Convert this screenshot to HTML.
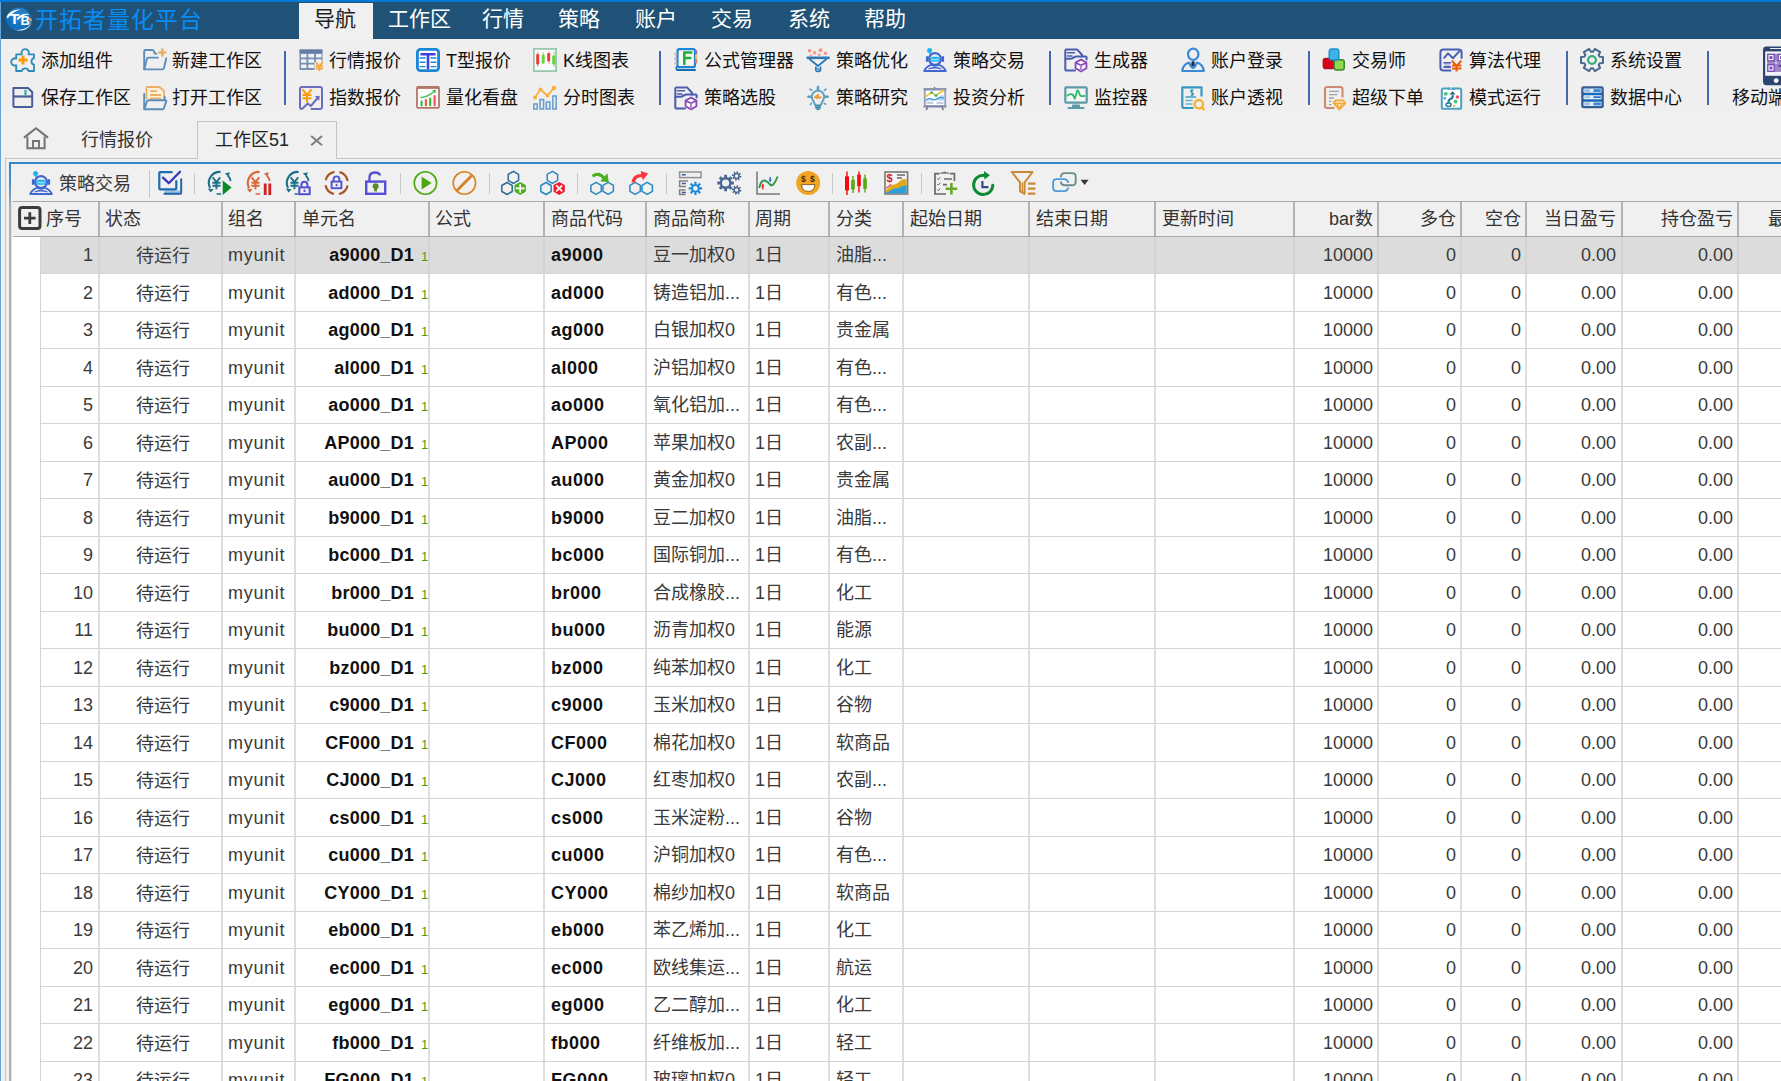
<!DOCTYPE html>
<html lang="zh-CN"><head><meta charset="utf-8"><title>开拓者量化平台</title>
<style>
*{box-sizing:border-box;margin:0;padding:0}
html,body{width:1781px;height:1081px;overflow:hidden}
body{position:relative;background:#f0f0f0;font-family:"Liberation Sans","Noto Sans CJK SC",sans-serif;font-size:18px;color:#1a1a1a;line-height:1}
.a{position:absolute;white-space:nowrap}
#title{left:0;top:0;width:1781px;height:39px;background:#1f5276;border-top:2px solid #0078d4}
#lb{left:0;top:2px;width:1px;height:1081px;background:#62a4d8}
#tt{left:35px;top:6px;font-size:23px;letter-spacing:1px;color:#0a8cf5;line-height:28px}
.mn{top:4px;height:34px;line-height:29px;font-size:21px;color:#fff;text-align:center}
#mact{left:299px;top:3px;width:74px;height:36px;background:#f0f0f0}
#ribbon{left:1px;top:39px;width:1780px;height:75px;background:#efefef}
.rt{font-size:18px;line-height:24px;color:#111;height:24px}
.rs{width:2px;background:#4466ac;top:51px;height:54px}
.ic{position:absolute;overflow:visible}
#tabline{left:5px;top:158px;width:1776px;height:1px;background:#c4c4c4}
#tabl{left:5px;top:158px;width:1px;height:923px;background:#c4c4c4}
#tabl2{left:6px;top:159px;width:1px;height:923px;background:#dcdcdc}
#acttab{left:197px;top:121px;width:140px;height:38px;background:#f0f0f0;border:1px solid #c4c4c4;border-bottom:none}
.dt{font-size:18px;line-height:24px;top:128px;color:#333}
#panel{left:10px;top:162px;width:1780px;height:930px;border-top:2px solid #3288ca;background:#f0f0f0}
#panl{left:9px;top:162px;width:2px;height:930px;background:linear-gradient(to bottom,#3288ca 0px,#4a8ec6 22px,#8aa2b8 36px,#b0b0b0 46px,#b2b2b2 100%)}
#panl2{left:11px;top:200px;width:1px;height:900px;background:#e0e0e0}
#tbline{display:none}
#hdr{left:13px;top:201px;width:1768px;height:36px;background:#f0f0f0;border-bottom:1px solid #a8a8a8;border-top:1px solid #a8a8a8}
.hd{top:203px;height:32px;line-height:33px;font-size:18px;color:#333}
.hv{top:202px;width:2px;height:34px;background:#b2b2b2}
#grid{left:12px;top:237px;width:1769px;height:844px;background:#fff}
.row{left:40px;width:1741px;height:1px;background:#d4d4d4}
.cv{top:237px;width:2px;height:844px;background:#dedede}
#sel{left:40px;top:237px;width:1741px;height:37px;background:#dcdcdc}
.c{height:37px;line-height:36px;font-size:18px;color:#3a3a3a}
.b{font-weight:bold;color:#111}
.g{color:#4aa010;font-size:13px;padding-top:2px}
.m{letter-spacing:0.7px}
.b1{letter-spacing:0.5px}
.b2{letter-spacing:0.2px}
  .tsep{top:173px;width:1px;height:21px;background:#c8c8c8}
</style></head>
<body>
<div class="a" id="title"></div>
<div class="a" id="mact"></div>
<svg class="ic" style="left:6px;top:7px" width="26" height="25" viewBox="0 0 26 25" fill="none"><defs><radialGradient id="lg" cx="0.55" cy="0.35" r="0.75"><stop offset="0" stop-color="#2a86d0"/><stop offset="1" stop-color="#0664b4"/></radialGradient></defs>
<ellipse cx="12.7" cy="12.3" rx="12.6" ry="11.7" fill="url(#lg)"/>
<path d="M0.5 10 C2.6 5 8 2.2 15 2.2 C9.4 4 4.6 7 1.6 11.6 Z" fill="#fff"/>
<path d="M10.8 11.6 C13.6 7.6 18.6 6 23.6 7.2 C18.6 7.8 14.6 9.8 11.8 13.2Z" fill="#fff"/>
<path d="M25.2 13.4 C25 20 17.4 23.6 8 22.8 C16.4 25.4 25.2 21.6 25.4 14Z" fill="#fff" opacity="0.92"/>
<text x="8.4" y="17" text-anchor="middle" font-family="'Liberation Sans',sans-serif" font-weight="bold" font-size="15.5" fill="#fff">T</text>
<text x="14.6" y="18.4" font-family="'Liberation Sans',sans-serif" font-weight="bold" font-size="13" fill="#fff">B</text>
<circle cx="24.3" cy="12.6" r="1.6" fill="#eea040"/></svg>
<div class="a" id="tt">开拓者量化平台</div>
<div class="a mn" style="left:314px;color:#222">导航</div>
<div class="a mn" style="left:388px;color:#fff">工作区</div>
<div class="a mn" style="left:482px;color:#fff">行情</div>
<div class="a mn" style="left:558px;color:#fff">策略</div>
<div class="a mn" style="left:635px;color:#fff">账户</div>
<div class="a mn" style="left:711px;color:#fff">交易</div>
<div class="a mn" style="left:788px;color:#fff">系统</div>
<div class="a mn" style="left:864px;color:#fff">帮助</div>
<div class="a" id="ribbon"></div>
<svg class="ic" style="left:11px;top:48px" width="24" height="24" viewBox="0 0 24 24" fill="none"><path d="M5.2 6.3 H10.8 A3.7 3.7 0 1 1 17.6 6.3 H23 V10.2 A3.3 3.3 0 0 0 23 16.6 V23 H17.6 A3.5 3.5 0 0 0 10.8 23 H5.2 V17.2 A3.6 3.6 0 1 1 5.2 10.6 Z" stroke="#2a8ab8" stroke-width="1.8" stroke-linejoin="round"/>
<path d="M12 7.5v9M7.5 12h9" stroke="#fa9a0c" stroke-width="3"/></svg>
<div class="a rt" style="left:41px;top:49px">添加组件</div>
<svg class="ic" style="left:143px;top:48px" width="24" height="24" viewBox="0 0 24 24" fill="none"><path d="M1.2 20.5 V3.2 Q1.2 2 2.4 2 H9.5 Q10.6 2 10.9 3 L11.8 5.6 H13.5" stroke="#5b8db8" stroke-width="1.9" stroke-linecap="round" stroke-linejoin="round"/>
<path d="M1.3 21.3 L4 10.6 Q4.3 9.6 5.4 9.6 H15" stroke="#5b8db8" stroke-width="1.9" stroke-linecap="round" stroke-linejoin="round"/>
<path d="M1.3 21.4 H19.5 Q20.6 21.4 20.9 20.3 L23.3 10.3" stroke="#5b8db8" stroke-width="1.9" stroke-linecap="round" stroke-linejoin="round"/>
<path d="M19.3 0.5v8M15.3 4.5h8" stroke="#eab068" stroke-width="2.6"/></svg>
<div class="a rt" style="left:172px;top:49px">新建工作区</div>
<svg class="ic" style="left:11px;top:84.7px" width="24" height="24" viewBox="0 0 24 24" fill="none"><path d="M2.4 3 H17 L21.2 7 V21 Q21.2 22 20.2 22 H3.4 Q2.4 22 2.4 21 Z" stroke="#4a5c9a" stroke-width="2" stroke-linejoin="round"/>
<path d="M2.4 11.5H21.2" stroke="#4a5c9a" stroke-width="2.2"/>
<path d="M14.5 5.6v4" stroke="#3cb8a8" stroke-width="2.4" stroke-linecap="round"/></svg>
<div class="a rt" style="left:41px;top:86px">保存工作区</div>
<svg class="ic" style="left:143px;top:85.5px" width="24" height="24" viewBox="0 0 24 24" fill="none"><path d="M3.5 13 V2 Q3.5 1 4.5 1 H16.5 L21 5 V13" fill="#fdf1de" stroke="#eab068" stroke-width="1.8" stroke-linejoin="round"/>
<path d="M7 5.2h7M7 9h11M7 12.3h11" stroke="#eab068" stroke-width="1.8"/>
<path d="M1.2 8 V22.6" stroke="#5b8db8" stroke-width="1.9" stroke-linecap="round"/>
<path d="M21.6 11v3" stroke="#5b8db8" stroke-width="1.9" stroke-linecap="round"/>
<path d="M1.3 23.3 L4 15.2 Q4.3 14.2 5.4 14.2 H22.3 Q23.6 14.2 23.2 15.4 L20.9 22.3 Q20.6 23.3 19.5 23.3 Z" fill="#efefef" stroke="#5b8db8" stroke-width="1.9" stroke-linejoin="round"/></svg>
<div class="a rt" style="left:172px;top:86px">打开工作区</div>
<svg class="ic" style="left:299px;top:48px" width="24" height="24" viewBox="0 0 24 24" fill="none"><rect x="0.5" y="1.5" width="23" height="20.5" rx="1" fill="#7a90b0"/>
<rect x="0.5" y="1.5" width="23" height="3.5" fill="#647ea6"/>
<g fill="#f0f2f6"><rect x="2" y="6" width="5.5" height="3.4" rx="0.6"/><rect x="9.3" y="6" width="5.8" height="3.4" rx="0.6"/><rect x="17" y="6" width="5.5" height="3.4" rx="0.6"/>
<rect x="2" y="11.3" width="5.5" height="3.4" rx="0.6"/><rect x="9.3" y="11.3" width="5.8" height="3.4" rx="0.6"/><rect x="17" y="11.3" width="5.5" height="3" rx="0.6"/>
<rect x="2" y="16.6" width="5.5" height="3.4" rx="0.6"/><rect x="9.3" y="16.6" width="5.8" height="3.4" rx="0.6"/></g>
<rect x="15.5" y="13.5" width="9" height="9.5" fill="#efefef"/>
<path d="M16.8 14 L20.3 18.5 L23.8 14 M20.3 18.5 V23 M16.8 18.3h7 M16.8 20.6h7" stroke="#f8a838" stroke-width="1.9"/></svg>
<div class="a rt" style="left:329px;top:49px">行情报价</div>
<svg class="ic" style="left:416px;top:48px" width="24" height="24" viewBox="0 0 24 24" fill="none"><rect x="1.4" y="1.4" width="21.2" height="21.2" rx="3" stroke="#1a86d8" stroke-width="2.8" fill="#fff"/>
<path d="M3.5 10h6M3.5 14.3h6M3.5 18.6h6M14.5 10h6M14.5 14.3h6M14.5 18.6h6" stroke="#1a86d8" stroke-width="1.4"/>
<path d="M5.5 6.2h13M12 6.2v14" stroke="#3c40dc" stroke-width="2.6" stroke-linecap="round"/></svg>
<div class="a rt" style="left:446px;top:49px">T型报价</div>
<svg class="ic" style="left:533px;top:48px" width="24" height="24" viewBox="0 0 24 24" fill="none"><rect x="0.9" y="0.9" width="22.2" height="22.2" fill="#fbfbfb" stroke="#94c4ae" stroke-width="1.7"/>
<path d="M4.7 3.5v15.5M16 3.5v12.5" stroke="#f4a0a0" stroke-width="1.2"/>
<path d="M10.2 4v12M21 3.5v15.5" stroke="#a8e090" stroke-width="1.2"/>
<rect x="3.2" y="6" width="3" height="10.5" rx="0.8" fill="#ee3c3c"/>
<rect x="8.7" y="6.5" width="3" height="9" rx="1.2" fill="#66d440"/>
<rect x="14.2" y="5" width="3" height="8.5" rx="1.2" fill="#ee3c3c"/>
<rect x="19.2" y="7.5" width="3.2" height="9" rx="0.8" fill="#66d440"/></svg>
<div class="a rt" style="left:563px;top:49px">K线图表</div>
<svg class="ic" style="left:299px;top:85.5px" width="24" height="24" viewBox="0 0 24 24" fill="none"><path d="M12.5 23 H21 Q23 23 23 21 V3 Q23 1 21 1 H3 Q1 1 1 3 V21.5" stroke="#6a6eb8" stroke-width="2" stroke-linecap="round"/>
<path d="M1.5 22.5 Q2.5 23.5 3.8 22.3 L8.8 17.5 L11.8 20 L19.5 11" stroke="#6a6eb8" stroke-width="2" stroke-linecap="round" stroke-linejoin="round"/>
<path d="M15.8 10.2 L20.6 9.8 L20.2 14.8 Z" fill="#6a6eb8"/>
<path d="M3.5 3.5 L8 9 L12.5 3.5 M8 9 V16.5 M3.5 9h9 M3.5 12.3h9" stroke="#fa9a0c" stroke-width="2"/></svg>
<div class="a rt" style="left:329px;top:86px">指数报价</div>
<svg class="ic" style="left:416px;top:85.5px" width="24" height="23" viewBox="0 0 24 23" fill="none"><rect x="1" y="1" width="22" height="20.8" rx="1" fill="#fbfbfb" stroke="#b27868" stroke-width="1.8"/>
<path d="M1 1.8h22" stroke="#b27868" stroke-width="2.2"/>
<path d="M5.6 15.5v3.8M14.2 12.5v6.8" stroke="#3cb83c" stroke-width="2.2" stroke-linecap="round"/>
<path d="M9.9 14v5.3M18.6 10v9.3" stroke="#f05858" stroke-width="2.2" stroke-linecap="round"/>
<path d="M5 11.5 Q12 11 18 5.5" stroke="#58c068" stroke-width="1.6" stroke-linecap="round"/>
<path d="M16.2 4.2 L19.8 3.8 L19.4 7.6 Z" fill="#3cb83c"/></svg>
<div class="a rt" style="left:446px;top:86px">量化看盘</div>
<svg class="ic" style="left:533px;top:85.5px" width="24" height="24" viewBox="0 0 24 24" fill="none"><path d="M2 11.5 L7.5 3.5 L14.5 9.5 L21 1.8" stroke="#fab040" stroke-width="1.8" stroke-linejoin="round"/>
<circle cx="2" cy="11.5" r="2" fill="#fab040"/><circle cx="7.5" cy="3.6" r="2" fill="#fab040"/><circle cx="14.5" cy="9.4" r="2" fill="#fab040"/><circle cx="21" cy="2" r="2.3" fill="#fab040"/>
<g stroke="#6c9ccc" stroke-width="1.5" fill="#e4ebf3"><rect x="0.8" y="18" width="3.4" height="5"/><rect x="7" y="13.5" width="3.6" height="9.5"/><rect x="13.3" y="16" width="3.6" height="7"/><rect x="19.8" y="10" width="3.4" height="13"/></g></svg>
<div class="a rt" style="left:563px;top:86px">分时图表</div>
<svg class="ic" style="left:674px;top:48px" width="24" height="24" viewBox="0 0 24 24" fill="none"><path d="M3.5 22 H21" stroke="#1a6ea8" stroke-width="2" stroke-linecap="round"/>
<path d="M3.2 22 Q1.8 21 2.5 19" stroke="#1a6ea8" stroke-width="1.8" stroke-linecap="round"/>
<rect x="3.5" y="1.2" width="17.5" height="18" rx="2" fill="#fbf6f0" stroke="#1a86d8" stroke-width="2.2"/>
<rect x="21.2" y="2" width="2" height="4.6" fill="#a868c8"/><rect x="21.2" y="6.6" width="2" height="4.4" fill="#f8d048"/><rect x="21.2" y="11" width="2" height="4.4" fill="#f07868"/>
<circle cx="1.8" cy="6" r="1.5" fill="#b8b8b8"/><circle cx="1.8" cy="10.5" r="1.5" fill="#b8b8b8"/><circle cx="1.8" cy="15" r="1.5" fill="#b8b8b8"/>
<path d="M10.3 16V4.5h7M10.3 10h6" stroke="#1ab03c" stroke-width="2.5" stroke-linecap="round" stroke-linejoin="round"/></svg>
<div class="a rt" style="left:704px;top:49px">公式管理器</div>
<svg class="ic" style="left:806px;top:48px" width="24" height="24" viewBox="0 0 24 24" fill="none"><circle cx="3.5" cy="2.8" r="1.8" fill="#fa9080"/><circle cx="8.6" cy="4.8" r="1.7" fill="#fa9080"/><circle cx="14.5" cy="2.2" r="1.9" fill="#fa9080"/><circle cx="19.4" cy="5.2" r="1.7" fill="#fa9080"/><circle cx="13.2" cy="6.8" r="1.3" fill="#fa9080"/><circle cx="4.8" cy="7.4" r="1.1" fill="#fa9080"/>
<path d="M0.6 9.8H23.6" stroke="#2a7ab8" stroke-width="2.6"/>
<path d="M3.2 10.8 L12 18 L20.8 10.8" stroke="#2a7ab8" stroke-width="1.8" stroke-linejoin="round"/>
<path d="M9.8 18.5 V22 Q9.8 23.3 11.1 23.3 H13.2 Q14.5 23.3 14.5 22 V18.5" stroke="#2a7ab8" stroke-width="1.7"/>
<path d="M10.3 20 L13.8 22" stroke="#2a7ab8" stroke-width="1.2"/></svg>
<div class="a rt" style="left:836px;top:49px">策略优化</div>
<svg class="ic" style="left:923px;top:48px" width="24" height="24" viewBox="0 0 24 24" fill="none"><path d="M6.6 4.6 L8 7.4" stroke="#1ab4f0" stroke-width="1.6"/><circle cx="6.6" cy="2.6" r="2.5" fill="#1ab4f0"/>
<circle cx="12" cy="11" r="5.9" stroke="#4068d0" stroke-width="2.2"/>
<path d="M4.2 8.2v5.6M19.8 8.2v5.6" stroke="#4068d0" stroke-width="2.6"/>
<rect x="7.8" y="9.3" width="8.4" height="3.8" rx="1.9" fill="#8adcf8" stroke="#1ab4f0" stroke-width="1.2"/>
<path d="M9.5 10.2h5" stroke="#1ab4f0" stroke-width="1.2"/>
<path d="M1.2 23 Q3 18.5 8.6 16.6 Q12 19 15.4 16.6 Q21 18.5 22.8 23 Z" stroke="#4068d0" stroke-width="2" stroke-linejoin="round"/>
<path d="M5.5 21 Q12 18.5 18.5 21" stroke="#4068d0" stroke-width="1.3"/></svg>
<div class="a rt" style="left:953px;top:49px">策略交易</div>
<svg class="ic" style="left:674px;top:85.5px" width="24" height="24" viewBox="0 0 24 24" fill="none"><path d="M11 22.6 H2.5 Q1.3 22.6 1.3 21.4 V2.6 Q1.3 1.4 2.5 1.4 H13 L18 6.8 V8.5" stroke="#4a5cb0" stroke-width="2" stroke-linecap="round" stroke-linejoin="round"/>
<path d="M3.5 4.8h7M3.5 7.9h4.5" stroke="#4a5cb0" stroke-width="1.5" stroke-linecap="round"/>
<path d="M1.6 10.8 H6 Q8 10.8 9.5 9.6 Q11 8.5 13 8.5 H21.6 Q22.6 8.5 22.6 9.6 V11.5" stroke="#4a5cb0" stroke-width="2" stroke-linecap="round"/>
<path d="M17 11.6 L22.4 14.5 V20.3 L17 23.4 L11.6 20.3 V14.5 Z" fill="#fff" stroke="#8a48b8" stroke-width="1.9" stroke-linejoin="round"/>
<path d="M11.8 14.7 L17 17.3 L22.2 14.7" stroke="#8a48b8" stroke-width="1.7"/>
<path d="M17 17.3V23" stroke="#b088d0" stroke-width="2.2"/></svg>
<div class="a rt" style="left:704px;top:86px">策略选股</div>
<svg class="ic" style="left:806px;top:85.5px" width="24" height="24" viewBox="0 0 24 24" fill="none"><g stroke="#5c9ebc" stroke-linecap="round"><path d="M12 1v2.6" stroke-width="2.6"/><path d="M2.3 10.7h3M18.7 10.7h3" stroke-width="2.4"/><path d="M4 3.2l1.8 1M20 3.2l-1.6 1.2M4.4 18.6l1-1.4M19.8 18.2l-1.6-.8" stroke-width="1.6"/></g>
<path d="M9 19.2 Q8.6 16.8 7.2 14.8 Q5.8 13 5.8 10.8 A6.2 6.2 0 0 1 18.2 10.8 Q18.2 13 16.800000000000001 14.8 Q15.4 16.8 15 19.2" stroke="#5c9ebc" stroke-width="1.9"/>
<path d="M8.8 19.6h6.4M9.2 21.8h5.6" stroke="#3a8aaa" stroke-width="2"/>
<path d="M10.5 23.4h3" stroke="#3a8aaa" stroke-width="1.6"/>
<path d="M8 11.3 L12.6 8 L12.4 10.6 L16 11.4 L11.2 12.6 Z" fill="#eaa040" stroke="#eaa040" stroke-width="1"/></svg>
<div class="a rt" style="left:836px;top:86px">策略研究</div>
<svg class="ic" style="left:923px;top:85.5px" width="24" height="24" viewBox="0 0 24 24" fill="none"><path d="M11.5 0.5 L13 2.5 H10z" fill="#7078a0"/>
<path d="M4.5 21l-1 2.5M19 21l1 2.5" stroke="#6a7290" stroke-width="1.6" stroke-linecap="round"/>
<rect x="1.8" y="3.4" width="20.4" height="16.6" fill="#fff" stroke="#9ca2bc" stroke-width="1.9"/>
<path d="M0.6 3.2h22.8" stroke="#8a90b0" stroke-width="2.2"/>
<path d="M0.6 20.6h22.8" stroke="#8088a8" stroke-width="1.8"/>
<path d="M2.6 14 Q6 10.5 9 12.5 Q12 14.5 14 12 Q17 8.5 21.4 9.5 V14.5 H2.6Z" fill="#a8d4f0"/>
<path d="M2.6 14.5 Q6 11.5 8.5 13 Q11 14.5 13.5 13 Q17 11 21.4 12" stroke="#4a98d8" stroke-width="1.2"/>
<path d="M2.6 10.5 L8.5 6.5 L13 9.5 L20 4.5" stroke="#f4c838" stroke-width="2" stroke-linejoin="round"/>
<circle cx="8.6" cy="6.6" r="1.3" fill="#28b890"/><circle cx="13" cy="9.6" r="1.4" fill="#28b890"/><circle cx="19.6" cy="4.8" r="1.3" fill="#f4c838"/>
<path d="M3.5 16.8h7M13.5 16.8h7" stroke="#c8ccd8" stroke-width="2.2"/></svg>
<div class="a rt" style="left:953px;top:86px">投资分析</div>
<svg class="ic" style="left:1064px;top:48px" width="24" height="24" viewBox="0 0 24 24" fill="none"><path d="M11 22.6 H2.5 Q1.3 22.6 1.3 21.4 V2.6 Q1.3 1.4 2.5 1.4 H13 L18 6.8 V8.5" stroke="#4a5cb0" stroke-width="2" stroke-linecap="round" stroke-linejoin="round"/>
<path d="M3.5 4.8h7M3.5 7.9h4.5" stroke="#4a5cb0" stroke-width="1.5" stroke-linecap="round"/>
<path d="M1.6 10.8 H6 Q8 10.8 9.5 9.6 Q11 8.5 13 8.5 H21.6 Q22.6 8.5 22.6 9.6 V11.5" stroke="#4a5cb0" stroke-width="2" stroke-linecap="round"/>
<path d="M17 11.6 L22.4 14.5 V20.3 L17 23.4 L11.6 20.3 V14.5 Z" fill="#fff" stroke="#8a48b8" stroke-width="1.9" stroke-linejoin="round"/>
<path d="M11.8 14.7 L17 17.3 L22.2 14.7" stroke="#8a48b8" stroke-width="1.7"/>
<path d="M17 17.3V23" stroke="#b088d0" stroke-width="2.2"/></svg>
<div class="a rt" style="left:1094px;top:49px">生成器</div>
<svg class="ic" style="left:1181px;top:48px" width="24" height="24" viewBox="0 0 24 24" fill="none"><ellipse cx="12.2" cy="6.3" rx="5.2" ry="5.6" stroke="#3a8ad8" stroke-width="2.2"/>
<path d="M8.2 14.6 Q2 16.5 1.2 23 H22.8 Q22 16.5 15.8 14.6 Q14.5 19 12 20 Q9.5 19 8.2 14.6Z" stroke="#3a8ad8" stroke-width="2.1" stroke-linejoin="round"/>
<path d="M10.6 13.2 H13.4 L13.8 17 L12 18.6 L10.2 17Z" fill="#1c2c50"/></svg>
<div class="a rt" style="left:1211px;top:49px">账户登录</div>
<svg class="ic" style="left:1064px;top:85.5px" width="24" height="23" viewBox="0 0 24 23" fill="none"><rect x="1.3" y="1.3" width="21.4" height="15.4" rx="1" fill="#f4f4f4" stroke="#5c9aa8" stroke-width="2.2"/>
<path d="M8.5 18.5 H15.5 L16.3 21 H7.7Z" fill="#5c9aa8"/>
<path d="M4.5 22h15" stroke="#5c9aa8" stroke-width="2" stroke-linecap="round"/>
<path d="M3.4 9.6 Q5.5 7.5 8 8.4 Q9.6 9 10.8 12.8 Q12 9 13 5 Q14 3 15 6.5 Q16 10.5 18 10.2 Q19.5 10 20.6 9.8" stroke="#28b868" stroke-width="1.7" stroke-linecap="round" stroke-linejoin="round"/></svg>
<div class="a rt" style="left:1094px;top:86px">监控器</div>
<svg class="ic" style="left:1181px;top:85.5px" width="24" height="24" viewBox="0 0 24 24" fill="none"><path d="M12.5 22 H3 Q1.3 22 1.3 20.3 V1.3 H20.5 V10.5" stroke="#3a98c0" stroke-width="2.2" stroke-linejoin="round"/>
<path d="M4.5 11h10.5" stroke="#6ab4d4" stroke-width="2"/><path d="M4.5 14.6h7M4.5 18h7" stroke="#6ab4d4" stroke-width="1.5"/>
<path d="M12.2 4 Q9.6 4 9.8 5.4 Q10 6.6 11.2 6.8 Q12.6 7.2 12.4 8.4 Q12.2 9.4 9.8 9.2 M11 3v7" stroke="#3a98c0" stroke-width="1.3"/>
<circle cx="17.8" cy="18.2" r="4.2" stroke="#f8b030" stroke-width="2.4"/>
<path d="M21 21.5 l1.8 1.8" stroke="#f8b030" stroke-width="2.4" stroke-linecap="round"/></svg>
<div class="a rt" style="left:1211px;top:86px">账户透视</div>
<svg class="ic" style="left:1322px;top:48px" width="24" height="24" viewBox="0 0 24 24" fill="none"><rect x="1.3" y="10.4" width="10.6" height="10.2" rx="2.2" fill="#dc0014" stroke="#a81424" stroke-width="1.4"/>
<rect x="12.2" y="11.8" width="10" height="10.2" rx="2.2" fill="#90d850" stroke="#38882a" stroke-width="1.5"/>
<rect x="7.2" y="1" width="9.6" height="11" rx="2.4" fill="#3cb4e8" stroke="#1c8cd0" stroke-width="1.4"/></svg>
<div class="a rt" style="left:1352px;top:49px">交易师</div>
<svg class="ic" style="left:1439px;top:48px" width="24" height="24" viewBox="0 0 24 24" fill="none"><path d="M11.5 22.6 H4.5 Q1.4 22.6 1.4 19.5 V4.5 Q1.4 1.4 4.5 1.4 H19.5 Q22.6 1.4 22.6 4.5 V10" stroke="#4a5cb0" stroke-width="2" stroke-linecap="round"/>
<path d="M5.2 9.8 L9 5.4 L14 10.2 L20 3.6" stroke="#4a5cb0" stroke-width="2" stroke-linejoin="round" stroke-linecap="round"/>
<path d="M5.2 14.8h6M5.2 19h6" stroke="#4a5cb0" stroke-width="1.8" stroke-linecap="round"/>
<rect x="5.2" y="15.7" width="6" height="2.4" fill="#c0c8e4"/>
<path d="M12.8 12.6 L17.5 18 L22.4 12.6 M17.5 18 V23.6 M13 17.4h9.4 M13 20.6h9.4" stroke="#e85c08" stroke-width="2"/></svg>
<div class="a rt" style="left:1469px;top:49px">算法代理</div>
<svg class="ic" style="left:1322px;top:85.5px" width="24" height="24" viewBox="0 0 24 24" fill="none"><path d="M11.5 22 H5 Q3 22 3 20 V3 Q3 1 5 1 H18.5 Q20.5 1 20.5 3 V10.5" stroke="#cc8a74" stroke-width="2.1" stroke-linecap="round"/>
<path d="M7 5.3h10M7 8.6h8.5M7 12h5M7 15.4h2.5M7 18.6h2.5" stroke="#a0a0b0" stroke-width="1.3"/>
<path d="M13.8 14.4 H21.2 L23.4 17.2 L17.5 23.4 L11.6 17.2Z" fill="#fde8c4" stroke="#f8a838" stroke-width="1.9" stroke-linejoin="round"/>
<path d="M11.8 17.3 H23.2 M15 17.3 L17.5 23 L20 17.3" stroke="#f8a838" stroke-width="1.3"/></svg>
<div class="a rt" style="left:1352px;top:86px">超级下单</div>
<svg class="ic" style="left:1439px;top:85.5px" width="24" height="24" viewBox="0 0 24 24" fill="none"><rect x="2.8" y="2.4" width="19.4" height="20.4" rx="1.6" fill="#fff" stroke="#4aa2c2" stroke-width="2"/>
<path d="M8.5 1.8 H16.5 Q17.3 1.8 17 2.6 Q16.2 4 14.5 4 H10.5 Q8.8 4 8 2.6 Q7.7 1.8 8.5 1.8Z" fill="#4aa2c2"/>
<path d="M12 1v3.4" stroke="#fff" stroke-width="0.8"/>
<ellipse cx="9.6" cy="18.8" rx="2.6" ry="1.7" stroke="#2a7a9a" stroke-width="1.5"/>
<path d="M9.6 17 Q9 14 11.5 13 Q14.5 12 13.5 9" stroke="#2a7a9a" stroke-width="2.1"/>
<path d="M10.2 8.6 L13.6 5.6 L16.6 8.6Z" fill="#1c5c7c"/>
<circle cx="6.8" cy="7.8" r="1.9" fill="#3cc86c"/><circle cx="18.4" cy="11" r="1.7" fill="#f05060"/><circle cx="16.6" cy="15.6" r="1.9" fill="#3cc86c"/><circle cx="5.8" cy="12.2" r="1.3" fill="#38a8e8"/><path d="M14 18.4 L17.4 19.8 L14.2 21.4Z" fill="#f8b848"/></svg>
<div class="a rt" style="left:1469px;top:86px">模式运行</div>
<svg class="ic" style="left:1580px;top:48px" width="24" height="24" viewBox="0 0 24 24" fill="none"><path d="M19.63 8.72 L22.97 8.89 L22.97 15.11 L19.63 15.28 L18.65 16.97 L20.17 19.95 L14.79 23.05 L12.98 20.24 L11.02 20.24 L9.21 23.05 L3.83 19.95 L5.35 16.97 L4.37 15.28 L1.03 15.11 L1.03 8.89 L4.37 8.72 L5.35 7.03 L3.83 4.05 L9.21 0.95 L11.02 3.76 L12.98 3.76 L14.79 0.95 L20.17 4.05 L18.65 7.03Z" stroke="#4a6890" stroke-width="2" stroke-linejoin="round"/><circle cx="12" cy="12" r="3.9" stroke="#3caa78" stroke-width="2.3"/></svg>
<div class="a rt" style="left:1610px;top:49px">系统设置</div>
<svg preserveAspectRatio="none" class="ic" style="left:1580.5px;top:85.5px" width="23" height="22.5" viewBox="0 0 24 24" fill="none"><rect x="1.2" y="1.2" width="21.6" height="21.6" rx="1.6" fill="#1a68b8" stroke="#3a5c90" stroke-width="2"/>
<g><rect x="2.6" y="2.6" width="18.8" height="4.6" rx="0.8" fill="#e6eef8"/><rect x="2.6" y="9.8" width="18.8" height="4.2" rx="0.8" fill="#e6eef8"/><rect x="2.6" y="16.8" width="18.8" height="4.6" rx="0.8" fill="#e6eef8"/></g>
<g fill="#9cc0e8"><rect x="3.4" y="3.4" width="6" height="3"/><rect x="3.6" y="11" width="6" height="1.8"/><rect x="3.4" y="17.6" width="6" height="3"/></g>
<g fill="#3c84d0"><rect x="13" y="3.4" width="7.6" height="3"/><rect x="13" y="11" width="7.6" height="1.8" fill="#1a6cc8"/><rect x="13" y="17.6" width="7.6" height="3"/></g></svg>
<div class="a rt" style="left:1610px;top:86px">数据中心</div>
<div class="a rs" style="left:284px"></div>
<div class="a rs" style="left:659px"></div>
<div class="a rs" style="left:1049px"></div>
<div class="a rs" style="left:1308px"></div>
<div class="a rs" style="left:1566px"></div>
<div class="a rs" style="left:1707px"></div>
<svg class="ic" style="left:1762px;top:46px" width="28" height="40" viewBox="0 0 28 40" fill="none"><rect x="1" y="0.6" width="26" height="38.6" rx="3.4" fill="#2c4470"/>
<path d="M8.5 2.5h14" stroke="#e8ecf4" stroke-width="1.2" stroke-linecap="round"/>
<rect x="3.2" y="5.4" width="22" height="24.4" fill="#f2f2f6"/>
<rect x="5.2" y="7.8" width="18" height="18.2" fill="#a088c8"/>
<rect x="5.2" y="7.8" width="7.6" height="7.6" fill="#7048b0"/><rect x="7" y="9.6" width="4" height="4" fill="none" stroke="#fff" stroke-width="1.1"/>
<rect x="5.2" y="18.2" width="7.6" height="7.6" fill="#7048b0"/><rect x="7" y="20" width="4" height="4" fill="none" stroke="#fff" stroke-width="1.1"/>
<rect x="15.6" y="7.8" width="7.6" height="7.6" fill="#7048b0"/><rect x="17.4" y="9.6" width="4" height="4" fill="none" stroke="#fff" stroke-width="1.1"/>
<circle cx="14.2" cy="16.8" r="1.3" fill="#d0c4e4"/><rect x="16.4" y="18.8" width="3" height="2" fill="#5c38a0"/>
<circle cx="14.2" cy="34.6" r="2.4" fill="#fff"/></svg>
<div class="a rt" style="left:1732px;top:86px">移动端</div>
<div class="a" id="tabline"></div><div class="a" id="tabl"></div>
<div class="a" id="acttab"></div>
<svg class="ic" style="left:22.5px;top:127px" width="26" height="23" viewBox="0 0 26 23" fill="none"><path d="M1 10.6 L13 1.2 L25 10.6" stroke="#737373" stroke-width="2" stroke-linejoin="miter"/>
<path d="M4.4 9.5 V21.2 H21.6 V9.5" stroke="#737373" stroke-width="2"/>
<path d="M10 21 V14 H16 V21" stroke="#737373" stroke-width="1.9"/></svg>
<div class="a dt" style="left:81px">行情报价</div>
<div class="a dt" style="left:215px;color:#222">工作区51</div>
<svg class="ic" style="left:310px;top:135px" width="13" height="11" viewBox="0 0 13 11" fill="none"><path d="M1.2 1 L12 10.2 M12 1 L1.2 10.2" stroke="#808080" stroke-width="2.1"/></svg>
<div class="a" id="panel"></div><div class="a" id="panl"></div><div class="a" id="panl2"></div>
<svg class="ic" style="left:29px;top:171px" width="24" height="24" viewBox="0 0 24 24" fill="none"><path d="M6.6 4.6 L8 7.4" stroke="#1ab4f0" stroke-width="1.6"/><circle cx="6.6" cy="2.6" r="2.5" fill="#1ab4f0"/>
<circle cx="12" cy="11" r="5.9" stroke="#4068d0" stroke-width="2.2"/>
<path d="M4.2 8.2v5.6M19.8 8.2v5.6" stroke="#4068d0" stroke-width="2.6"/>
<rect x="7.8" y="9.3" width="8.4" height="3.8" rx="1.9" fill="#8adcf8" stroke="#1ab4f0" stroke-width="1.2"/>
<path d="M9.5 10.2h5" stroke="#1ab4f0" stroke-width="1.2"/>
<path d="M1.2 23 Q3 18.5 8.6 16.6 Q12 19 15.4 16.6 Q21 18.5 22.8 23 Z" stroke="#4068d0" stroke-width="2" stroke-linejoin="round"/>
<path d="M5.5 21 Q12 18.5 18.5 21" stroke="#4068d0" stroke-width="1.3"/></svg>
<div class="a rt" style="left:59px;top:172px;color:#3a3a3a">策略交易</div>
<svg class="ic" style="left:158px;top:171px" width="24" height="24" viewBox="0 0 24 24" fill="none"><path d="M6.4 19.4 H22 V22.6 H6.4Z" fill="#a4c2e0"/>
<path d="M6.4 22.7 H22.2 Q23.2 22.7 23.2 21.7 V8.2" stroke="#1c62a8" stroke-width="1.9" stroke-linecap="round"/>
<path d="M13.8 1.1 H2.4 Q1.3 1.1 1.3 2.2 V17.2 Q1.3 18.3 2.4 18.3 H17.2 Q18.3 18.3 18.3 17.2 V10" stroke="#1c6cb0" stroke-width="2.2" stroke-linecap="round"/>
<path d="M5 6.6 L10.8 12.2 L22 0.8" stroke="#3a38b8" stroke-width="2.3" stroke-linecap="round" stroke-linejoin="round"/></svg>
<svg class="ic" style="left:208px;top:171px" width="25" height="24" viewBox="0 0 25 24" fill="none"><path d="M12.6 0.95 A11 11 0 0 0 2.09 17.06" stroke="#1c7088" stroke-width="2.1"/>
<path d="M-0.2 17.4 L5.6 18.3 L2.6 21.6Z" fill="#1c7088"/>
<path d="M8.6 22.8 Q10.8 23.1 13 22.9" stroke="#1c7088" stroke-width="1.7"/>
<path d="M19.97 4.54 A11 11 0 0 1 22.63 9.99" stroke="#1c7088" stroke-width="1.9"/>
<path d="M16.8 2.4 L21.8 1.2 L20.6 5.8Z" fill="#1c7088"/>
<path d="M4.7 6.3 L8.45 11 L12.2 6.3 M8.45 11 V18.2 M4.4 11.7h8.1 M4.4 14.7h8.1" stroke="#1c7088" stroke-width="1.9"/><path d="M14.7 9.4 L23.6 16.4 L14.7 23.9Z" fill="#0c8a28"/></svg>
<svg class="ic" style="left:247px;top:171px" width="25" height="24" viewBox="0 0 25 24" fill="none"><path d="M12.6 0.95 A11 11 0 0 0 2.09 17.06" stroke="#d86838" stroke-width="2.1"/>
<path d="M-0.2 17.4 L5.6 18.3 L2.6 21.6Z" fill="#d86838"/>
<path d="M8.6 22.8 Q10.8 23.1 13 22.9" stroke="#d86838" stroke-width="1.7"/>
<path d="M19.97 4.54 A11 11 0 0 1 22.63 9.99" stroke="#d86838" stroke-width="1.9"/>
<path d="M16.8 2.4 L21.8 1.2 L20.6 5.8Z" fill="#d86838"/>
<path d="M4.7 6.3 L8.45 11 L12.2 6.3 M8.45 11 V18.2 M4.4 11.7h8.1 M4.4 14.7h8.1" stroke="#d86838" stroke-width="1.9"/><path d="M18.2 12.5v11.6M22.8 12.5v11.6" stroke="#d42020" stroke-width="2.8"/></svg>
<svg class="ic" style="left:286px;top:171px" width="25" height="24" viewBox="0 0 25 24" fill="none"><path d="M12.6 0.95 A11 11 0 0 0 2.09 17.06" stroke="#1c7088" stroke-width="2.1"/>
<path d="M-0.2 17.4 L5.6 18.3 L2.6 21.6Z" fill="#1c7088"/>
<path d="M8.6 22.8 Q10.8 23.1 13 22.9" stroke="#1c7088" stroke-width="1.7"/>
<path d="M19.97 4.54 A11 11 0 0 1 22.63 9.99" stroke="#1c7088" stroke-width="1.9"/>
<path d="M16.8 2.4 L21.8 1.2 L20.6 5.8Z" fill="#1c7088"/>
<path d="M4.7 6.3 L8.45 11 L12.2 6.3 M8.45 11 V18.2 M4.4 11.7h8.1 M4.4 14.7h8.1" stroke="#1c7088" stroke-width="1.9"/><rect x="12.4" y="15.4" width="12" height="8.6" fill="#efefef"/><path d="M15.4 16 V13.6 Q15.4 10.8 18.4 10.8 Q21.4 10.8 21.4 13.6 V16" stroke="#5450d4" stroke-width="2"/>
<rect x="13.3" y="16.4" width="10.4" height="6.8" stroke="#5450d4" stroke-width="2" fill="#efefef"/><rect x="17.6" y="18.6" width="1.8" height="2.4" fill="#5450d4"/></svg>
<svg class="ic" style="left:324px;top:171px" width="25" height="24" viewBox="0 0 25 24" fill="none"><circle cx="12.6" cy="12" r="11.3" stroke="#a85428" stroke-width="2.2" stroke-dasharray="12.6 5.15" stroke-dashoffset="-2.6"/>
<path d="M9.6 10.4 V8.4 Q9.6 5.4 12.5 5.4 Q15.4 5.4 15.4 8.4 V10.4" stroke="#5450d4" stroke-width="1.9"/>
<rect x="7.6" y="10.6" width="9.8" height="6.6" stroke="#5450d4" stroke-width="1.9"/><rect x="11.7" y="12.8" width="1.7" height="2.4" fill="#5450d4"/></svg>
<svg class="ic" style="left:364px;top:171px" width="24" height="24" viewBox="0 0 24 24" fill="none"><path d="M5.5 10.5 V6.5 Q5.5 1.5 10.8 1.5 Q15.4 1.5 16 4.4" stroke="#5450d4" stroke-width="2.3"/>
<rect x="2.2" y="10.6" width="19" height="12.2" stroke="#5450d4" stroke-width="2.4"/>
<circle cx="11.6" cy="15.2" r="3" fill="#5a8a28"/><path d="M11.6 15v5.4" stroke="#5a8a28" stroke-width="2.8"/></svg>
<svg class="ic" style="left:412.5px;top:171px" width="25" height="24" viewBox="0 0 25 24" fill="none"><circle cx="12.4" cy="12" r="11.2" stroke="#4ca810" stroke-width="1.6"/>
<path d="M8.6 5.6 L18.6 12 L8.6 18.4Z" fill="#4ca810"/></svg>
<svg class="ic" style="left:451.5px;top:171px" width="25" height="24" viewBox="0 0 25 24" fill="none"><circle cx="12.4" cy="12" r="11.2" stroke="#d88424" stroke-width="1.6"/>
<path d="M5 19.6 L19.8 4.4" stroke="#d88424" stroke-width="2.8"/></svg>
<svg class="ic" style="left:501px;top:171px" width="25" height="24" viewBox="0 0 25 24" fill="none"><path d="M17.60 9.30 L12.40 12.30 L7.20 9.30 L7.20 3.30 L12.40 0.30 L17.60 3.30 Z" stroke="#2a6c98" stroke-width="1.5" fill="none" stroke-linejoin="round"/><path d="M11.20 20.50 L6.00 23.50 L0.80 20.50 L0.80 14.50 L6.00 11.50 L11.20 14.50 Z" stroke="#2a6c98" stroke-width="1.5" fill="none" stroke-linejoin="round"/><path d="M23.88 20.10 L19.20 22.80 L14.52 20.10 L14.52 14.70 L19.20 12.00 L23.88 14.70 Z" fill="#4cb020" stroke="#4cb020" stroke-width="2" stroke-linejoin="round"/><path d="M19.2 13v8.8M14.8 17.4h8.8" stroke="#fff" stroke-width="1.6"/></svg>
<svg class="ic" style="left:540px;top:171px" width="25" height="24" viewBox="0 0 25 24" fill="none"><path d="M17.60 9.30 L12.40 12.30 L7.20 9.30 L7.20 3.30 L12.40 0.30 L17.60 3.30 Z" stroke="#2a88c0" stroke-width="1.5" fill="none" stroke-linejoin="round"/><path d="M11.20 20.50 L6.00 23.50 L0.80 20.50 L0.80 14.50 L6.00 11.50 L11.20 14.50 Z" stroke="#2a88c0" stroke-width="1.5" fill="none" stroke-linejoin="round"/><path d="M23.88 20.10 L19.20 22.80 L14.52 20.10 L14.52 14.70 L19.20 12.00 L23.88 14.70 Z" fill="#f02030" stroke="#f02030" stroke-width="2" stroke-linejoin="round"/><path d="M16.2 14.4l6 6M22.2 14.4l-6 6" stroke="#fff" stroke-width="1.6"/></svg>
<svg class="ic" style="left:590px;top:171px" width="25" height="24" viewBox="0 0 25 24" fill="none"><path d="M11.30 20.30 L6.10 23.30 L0.90 20.30 L0.90 14.30 L6.10 11.30 L11.30 14.30 Z" stroke="#2a88c0" stroke-width="1.5" fill="none" stroke-linejoin="round"/><path d="M23.40 20.30 L18.20 23.30 L13.00 20.30 L13.00 14.30 L18.20 11.30 L23.40 14.30 Z" stroke="#2a88c0" stroke-width="1.5" fill="none" stroke-linejoin="round"/><path d="M2.5 5.2 Q9 0.8 14.5 7.5" stroke="#4cb020" stroke-width="3.2"/><path d="M10.2 10.2 L18.8 11.2 L17.4 2.2Z" fill="#4cb020"/></svg>
<svg class="ic" style="left:629px;top:171px" width="25" height="24" viewBox="0 0 25 24" fill="none"><path d="M11.30 20.30 L6.10 23.30 L0.90 20.30 L0.90 14.30 L6.10 11.30 L11.30 14.30 Z" stroke="#2a88c0" stroke-width="1.5" fill="none" stroke-linejoin="round"/><path d="M23.40 20.30 L18.20 23.30 L13.00 20.30 L13.00 14.30 L18.20 11.30 L23.40 14.30 Z" stroke="#2a88c0" stroke-width="1.5" fill="none" stroke-linejoin="round"/><path d="M4.2 11.5 Q5 4.2 13.5 4.6" stroke="#f83840" stroke-width="3.4"/><path d="M11.6 0 L19.2 2.6 L13.8 9.2Z" fill="#f83840"/></svg>
<svg class="ic" style="left:678px;top:171px" width="25" height="24" viewBox="0 0 25 24" fill="none"><rect x="1.6" y="1" width="21.4" height="5.6" stroke="#909090" stroke-width="1.5"/>
<path d="M10 10 H1.6 V15.4 H8 M7.5 19 H1.6 V23.4 H7.5" stroke="#808080" stroke-width="1.5"/>
<path d="M3.8 3.8h4M3.8 12.6h4M3.8 21.6h4" stroke="#3858a8" stroke-width="1.5"/>
<path d="M21.57 16.36 L24.11 16.27 L24.11 18.53 L21.57 18.44 L21.09 19.61 L22.94 21.34 L21.34 22.94 L19.61 21.09 L18.44 21.57 L18.53 24.11 L16.27 24.11 L16.36 21.57 L15.19 21.09 L13.46 22.94 L11.86 21.34 L13.71 19.61 L13.23 18.44 L10.69 18.53 L10.69 16.27 L13.23 16.36 L13.71 15.19 L11.86 13.46 L13.46 11.86 L15.19 13.71 L16.36 13.23 L16.27 10.69 L18.53 10.69 L18.44 13.23 L19.61 13.71 L21.34 11.86 L22.94 13.46 L21.09 15.19Z" fill="#1c88d8"/><circle cx="17.4" cy="17.4" r="2.3" fill="#efefef"/></svg>
<svg class="ic" style="left:717px;top:171px" width="25" height="24" viewBox="0 0 25 24" fill="none"><path d="M14.42 10.54 L16.88 10.60 L16.88 13.40 L14.42 13.46 L13.75 15.08 L15.44 16.87 L13.47 18.84 L11.68 17.15 L10.06 17.82 L10.00 20.28 L7.20 20.28 L7.14 17.82 L5.52 17.15 L3.73 18.84 L1.76 16.87 L3.45 15.08 L2.78 13.46 L0.32 13.40 L0.32 10.60 L2.78 10.54 L3.45 8.92 L1.76 7.13 L3.73 5.16 L5.52 6.85 L7.14 6.18 L7.20 3.72 L10.00 3.72 L10.06 6.18 L11.68 6.85 L13.47 5.16 L15.44 7.13 L13.75 8.92Z" fill="#4a6890"/><circle cx="8.6" cy="12" r="3.6" fill="#efefef"/><path d="M22.80 4.85 L24.40 5.16 L24.08 6.72 L22.49 6.38 L21.96 7.16 L22.88 8.50 L21.55 9.39 L20.67 8.02 L19.75 8.20 L19.44 9.80 L17.88 9.48 L18.22 7.89 L17.44 7.36 L16.10 8.28 L15.21 6.95 L16.58 6.07 L16.40 5.15 L14.80 4.84 L15.12 3.28 L16.71 3.62 L17.24 2.84 L16.32 1.50 L17.65 0.61 L18.53 1.98 L19.45 1.80 L19.76 0.20 L21.32 0.52 L20.98 2.11 L21.76 2.64 L23.10 1.72 L23.99 3.05 L22.62 3.93Z" fill="#4a6890"/><circle cx="19.6" cy="5" r="1.7" fill="#efefef"/><path d="M22.80 18.85 L24.40 19.16 L24.08 20.72 L22.49 20.38 L21.96 21.16 L22.88 22.50 L21.55 23.39 L20.67 22.02 L19.75 22.20 L19.44 23.80 L17.88 23.48 L18.22 21.89 L17.44 21.36 L16.10 22.28 L15.21 20.95 L16.58 20.07 L16.40 19.15 L14.80 18.84 L15.12 17.28 L16.71 17.62 L17.24 16.84 L16.32 15.50 L17.65 14.61 L18.53 15.98 L19.45 15.80 L19.76 14.20 L21.32 14.52 L20.98 16.11 L21.76 16.64 L23.10 15.72 L23.99 17.05 L22.62 17.93Z" fill="#4a6890"/><circle cx="19.6" cy="19" r="1.7" fill="#efefef"/></svg>
<svg class="ic" style="left:756px;top:171px" width="25" height="24" viewBox="0 0 25 24" fill="none"><path d="M1 0.5 V23 H24" stroke="#787878" stroke-width="1.5"/>
<path d="M3.2 17 Q5 9 8.5 9.5 Q12 10.5 14 13.5 Q17 17 21.6 5.5" stroke="#2c9a4c" stroke-width="2"/>
<path d="M6.8 18.5v-5" stroke="#e82020" stroke-width="1.4"/><path d="M5.2 15.4 L6.8 12.4 L8.4 15.4Z" fill="#e82020"/>
<path d="M14.2 6v4" stroke="#3868d0" stroke-width="1.4"/><path d="M12.6 8.6 L14.2 11.4 L15.8 8.6Z" fill="#3868d0"/></svg>
<svg class="ic" style="left:795.5px;top:171px" width="25" height="24" viewBox="0 0 25 24" fill="none"><circle cx="12.2" cy="12" r="12" fill="#f2a424"/>
<path d="M5.4 13.6 H19 Q18.4 20.4 12.2 20.4 Q6 20.4 5.4 13.6Z" fill="#fff" stroke="#6a4410" stroke-width="0.8"/>
<text x="5" y="11" font-family="'Liberation Sans',sans-serif" font-weight="bold" font-size="8.5" fill="#3a2c10">$</text><text x="14" y="11" font-family="'Liberation Sans',sans-serif" font-weight="bold" font-size="8.5" fill="#3a2c10">$</text></svg>
<svg class="ic" style="left:844px;top:171px" width="24" height="24" viewBox="0 0 24 24" fill="none"><path d="M3 0.4v23.6M15 0.4v21" stroke="#f80808" stroke-width="1.4"/><path d="M9 5v17M21 3.5v18" stroke="#58a810" stroke-width="1.4"/>
<rect x="1" y="5.4" width="4" height="14" fill="#f80808"/><rect x="7.2" y="9" width="3.6" height="9.4" fill="#58a810"/><rect x="13.2" y="3.6" width="3.6" height="11.6" fill="#f80808"/><rect x="19.2" y="7.4" width="3.6" height="10.4" fill="#58a810"/></svg>
<svg class="ic" style="left:884px;top:171px" width="25" height="24" viewBox="0 0 25 24" fill="none"><rect x="1" y="1" width="22.6" height="22" fill="#f4f4f4" stroke="#787878" stroke-width="1.6"/>
<path d="M2 19 Q5 17 7 14.5 Q9 13 11 13.5 Q14 12 16 10 Q19 7 22.6 8.6 V22 H2Z" fill="#e0a818"/>
<path d="M2 21.4 Q6 20.5 9 18 Q12 17 14 17.5 Q17 15 22.6 14 V22.2 H2Z" fill="#28a0e0"/>
<path d="M2.2 17 Q5 16 7 13" stroke="#e86070" stroke-width="1.4"/>
<path d="M13 4h8M13 7h5" stroke="#686868" stroke-width="1.3"/>
<text x="2.6" y="11.4" font-family="'Liberation Sans',sans-serif" font-weight="bold" font-size="11" fill="#d81830">$</text></svg>
<svg class="ic" style="left:933px;top:171px" width="25" height="24" viewBox="0 0 25 24" fill="none"><path d="M6.5 2.6 H2 V23 H13" stroke="#686868" stroke-width="1.7"/><path d="M17 2.6 H21.4 V10" stroke="#686868" stroke-width="1.7"/>
<path d="M7 2.8 Q7 0.8 9.5 1.4 Q11.7 -0.4 14 1.4 Q16.6 0.8 16.6 2.8Z" fill="#787878"/>
<path d="M4.4 7.4 l1 1.2 l1.8 -2.4 M4.4 13 l1 1.2 l1.8 -2.4 M4.4 18.6 l1 1.2 l1.8 -2.4" stroke="#686868" stroke-width="1"/>
<path d="M11 8h8M10 13.6h4" stroke="#686868" stroke-width="1.6"/>
<path d="M18.4 12v11.6M12.6 17.8h11.6" stroke="#6aa82c" stroke-width="2.6"/></svg>
<svg class="ic" style="left:972px;top:171px" width="24" height="24" viewBox="0 0 24 24" fill="none"><path d="M12.6 3.6 A9.6 9.6 0 1 0 21.4 13.5" stroke="#0c8c34" stroke-width="3" stroke-linecap="round" transform="translate(-0.6,0.8)"/>
<path d="M12 0 L18 4.2 L12.4 8.6Z" fill="#0c8c34"/>
<path d="M10.4 10v6.2h6" stroke="#2c4c88" stroke-width="2.2"/></svg>
<svg class="ic" style="left:1011px;top:171px" width="25" height="24" viewBox="0 0 25 24" fill="none"><path d="M0.8 1 H21.6 L13.6 11.4 V23 L9 20.4 V11.4Z" stroke="#c88a34" stroke-width="1.9" stroke-linejoin="round"/>
<path d="M11.4 11.4v10.2" stroke="#c88a34" stroke-width="1.5"/>
<path d="M17 12.6h7.4M17 17.6h7.4M17 22.6h7.4" stroke="#c88a34" stroke-width="2.2"/></svg>
<svg class="ic" style="left:1052px;top:171px" width="38" height="24" viewBox="0 0 38 24" fill="none"><path d="M8.9 5.6 Q9.3 2.1 12.6 2.1 H20.2 Q23.7 2.1 23.7 5.6 V10.8 Q23.7 14.3 20.2 14.3 H12.6 Q9.6 14.3 8.9 11.3" stroke="#6c8c8c" stroke-width="1.9" stroke-linecap="round"/>
<path d="M16 11 Q15.4 8.1 12.2 8.1 H4.6 Q1.1 8.1 1.1 11.6 V16.6 Q1.1 20.1 4.6 20.1 H12.2 Q15.2 20.1 16 17.2" stroke="#4c9cdc" stroke-width="1.9" stroke-linecap="round"/>
<path d="M28.6 8.8 H36.6 L32.6 13.9Z" fill="#3a3a3a"/></svg>
<div class="a tsep" style="left:194px"></div>
<div class="a tsep" style="left:400px"></div>
<div class="a tsep" style="left:489px"></div>
<div class="a tsep" style="left:577px"></div>
<div class="a tsep" style="left:666px"></div>
<div class="a tsep" style="left:832px"></div>
<div class="a tsep" style="left:921px"></div>
<div class="a tsep" style="left:149px;top:170px;height:28px"></div>
<div class="a" id="tbline"></div>
<div class="a" id="hdr"></div>
<div class="a" id="grid"></div>
<div class="a" id="sel"></div>
<div class="a hd" style="left:46px">序号</div>
<div class="a hd" style="left:105px">状态</div>
<div class="a hd" style="left:228px">组名</div>
<div class="a hd" style="left:302px">单元名</div>
<div class="a hd" style="left:435px">公式</div>
<div class="a hd" style="left:551px">商品代码</div>
<div class="a hd" style="left:653px">商品简称</div>
<div class="a hd" style="left:755px">周期</div>
<div class="a hd" style="left:836px">分类</div>
<div class="a hd" style="left:910px">起始日期</div>
<div class="a hd" style="left:1036px">结束日期</div>
<div class="a hd" style="left:1162px">更新时间</div>
<div class="a hd" style="right:408px">bar数</div>
<div class="a hd" style="right:325px">多仓</div>
<div class="a hd" style="right:260px">空仓</div>
<div class="a hd" style="right:165px">当日盈亏</div>
<div class="a hd" style="right:48px">持仓盈亏</div>
<div class="a hd" style="left:1768px">最</div>
<div class="a hv" style="left:98px"></div>
<div class="a hv" style="left:221px"></div>
<div class="a hv" style="left:294px"></div>
<div class="a hv" style="left:428px"></div>
<div class="a hv" style="left:543px"></div>
<div class="a hv" style="left:645px"></div>
<div class="a hv" style="left:748px"></div>
<div class="a hv" style="left:828px"></div>
<div class="a hv" style="left:902px"></div>
<div class="a hv" style="left:1028px"></div>
<div class="a hv" style="left:1154px"></div>
<div class="a hv" style="left:1293px"></div>
<div class="a hv" style="left:1377px"></div>
<div class="a hv" style="left:1460px"></div>
<div class="a hv" style="left:1525px"></div>
<div class="a hv" style="left:1621px"></div>
<div class="a hv" style="left:1737px"></div>
<svg class="ic" style="left:18px;top:205.5px" width="24" height="25" viewBox="0 0 24 25" fill="none"><rect x="1.6" y="1.6" width="20.4" height="21" rx="2.6" stroke="#3c3c3c" stroke-width="3"/>
<path d="M6 12.1h11.6M11.8 6.3v11.6" stroke="#3c3c3c" stroke-width="2.8"/></svg>
<div class="a cv" style="left:40px;width:1px;background:#d4d4d4"></div>
<div class="a cv" style="left:98px"></div>
<div class="a" style="left:98px;top:237px;width:2px;height:37px;background:#d3d3d3"></div>
<div class="a cv" style="left:221px"></div>
<div class="a" style="left:221px;top:237px;width:2px;height:37px;background:#d3d3d3"></div>
<div class="a cv" style="left:294px"></div>
<div class="a" style="left:294px;top:237px;width:2px;height:37px;background:#d3d3d3"></div>
<div class="a cv" style="left:428px"></div>
<div class="a" style="left:428px;top:237px;width:2px;height:37px;background:#d3d3d3"></div>
<div class="a cv" style="left:543px"></div>
<div class="a" style="left:543px;top:237px;width:2px;height:37px;background:#d3d3d3"></div>
<div class="a cv" style="left:645px"></div>
<div class="a" style="left:645px;top:237px;width:2px;height:37px;background:#d3d3d3"></div>
<div class="a cv" style="left:748px"></div>
<div class="a" style="left:748px;top:237px;width:2px;height:37px;background:#d3d3d3"></div>
<div class="a cv" style="left:828px"></div>
<div class="a" style="left:828px;top:237px;width:2px;height:37px;background:#d3d3d3"></div>
<div class="a cv" style="left:902px"></div>
<div class="a" style="left:902px;top:237px;width:2px;height:37px;background:#d3d3d3"></div>
<div class="a cv" style="left:1028px"></div>
<div class="a" style="left:1028px;top:237px;width:2px;height:37px;background:#d3d3d3"></div>
<div class="a cv" style="left:1154px"></div>
<div class="a" style="left:1154px;top:237px;width:2px;height:37px;background:#d3d3d3"></div>
<div class="a cv" style="left:1293px"></div>
<div class="a" style="left:1293px;top:237px;width:2px;height:37px;background:#d3d3d3"></div>
<div class="a cv" style="left:1377px"></div>
<div class="a" style="left:1377px;top:237px;width:2px;height:37px;background:#d3d3d3"></div>
<div class="a cv" style="left:1460px"></div>
<div class="a" style="left:1460px;top:237px;width:2px;height:37px;background:#d3d3d3"></div>
<div class="a cv" style="left:1525px"></div>
<div class="a" style="left:1525px;top:237px;width:2px;height:37px;background:#d3d3d3"></div>
<div class="a cv" style="left:1621px"></div>
<div class="a" style="left:1621px;top:237px;width:2px;height:37px;background:#d3d3d3"></div>
<div class="a cv" style="left:1737px"></div>
<div class="a" style="left:1737px;top:237px;width:2px;height:37px;background:#d3d3d3"></div>
<div class="a row" style="top:273px"></div>
<div class="a c" style="right:1688px;top:237px">1</div>
<div class="a c" style="left:136px;top:238px">待运行</div>
<div class="a c m" style="left:228px;top:237px">myunit</div>
<div class="a c b b2" style="right:1367px;top:237px">a9000_D1</div>
<div class="a c g" style="left:421px;top:237px">1</div>
<div class="a c b b1" style="left:551px;top:237px">a9000</div>
<div class="a c" style="left:653px;top:237px">豆一加权0</div>
<div class="a c" style="left:755px;top:237px">1日</div>
<div class="a c" style="left:836px;top:237px">油脂...</div>
<div class="a c" style="right:408px;top:237px">10000</div>
<div class="a c" style="right:325px;top:237px">0</div>
<div class="a c" style="right:260px;top:237px">0</div>
<div class="a c" style="right:165px;top:237px">0.00</div>
<div class="a c" style="right:48px;top:237px">0.00</div>
<div class="a row" style="top:311px"></div>
<div class="a c" style="right:1688px;top:275px">2</div>
<div class="a c" style="left:136px;top:276px">待运行</div>
<div class="a c m" style="left:228px;top:275px">myunit</div>
<div class="a c b b2" style="right:1367px;top:275px">ad000_D1</div>
<div class="a c g" style="left:421px;top:275px">1</div>
<div class="a c b b1" style="left:551px;top:275px">ad000</div>
<div class="a c" style="left:653px;top:275px">铸造铝加...</div>
<div class="a c" style="left:755px;top:275px">1日</div>
<div class="a c" style="left:836px;top:275px">有色...</div>
<div class="a c" style="right:408px;top:275px">10000</div>
<div class="a c" style="right:325px;top:275px">0</div>
<div class="a c" style="right:260px;top:275px">0</div>
<div class="a c" style="right:165px;top:275px">0.00</div>
<div class="a c" style="right:48px;top:275px">0.00</div>
<div class="a row" style="top:348px"></div>
<div class="a c" style="right:1688px;top:312px">3</div>
<div class="a c" style="left:136px;top:313px">待运行</div>
<div class="a c m" style="left:228px;top:312px">myunit</div>
<div class="a c b b2" style="right:1367px;top:312px">ag000_D1</div>
<div class="a c g" style="left:421px;top:312px">1</div>
<div class="a c b b1" style="left:551px;top:312px">ag000</div>
<div class="a c" style="left:653px;top:312px">白银加权0</div>
<div class="a c" style="left:755px;top:312px">1日</div>
<div class="a c" style="left:836px;top:312px">贵金属</div>
<div class="a c" style="right:408px;top:312px">10000</div>
<div class="a c" style="right:325px;top:312px">0</div>
<div class="a c" style="right:260px;top:312px">0</div>
<div class="a c" style="right:165px;top:312px">0.00</div>
<div class="a c" style="right:48px;top:312px">0.00</div>
<div class="a row" style="top:386px"></div>
<div class="a c" style="right:1688px;top:350px">4</div>
<div class="a c" style="left:136px;top:351px">待运行</div>
<div class="a c m" style="left:228px;top:350px">myunit</div>
<div class="a c b b2" style="right:1367px;top:350px">al000_D1</div>
<div class="a c g" style="left:421px;top:350px">1</div>
<div class="a c b b1" style="left:551px;top:350px">al000</div>
<div class="a c" style="left:653px;top:350px">沪铝加权0</div>
<div class="a c" style="left:755px;top:350px">1日</div>
<div class="a c" style="left:836px;top:350px">有色...</div>
<div class="a c" style="right:408px;top:350px">10000</div>
<div class="a c" style="right:325px;top:350px">0</div>
<div class="a c" style="right:260px;top:350px">0</div>
<div class="a c" style="right:165px;top:350px">0.00</div>
<div class="a c" style="right:48px;top:350px">0.00</div>
<div class="a row" style="top:423px"></div>
<div class="a c" style="right:1688px;top:387px">5</div>
<div class="a c" style="left:136px;top:388px">待运行</div>
<div class="a c m" style="left:228px;top:387px">myunit</div>
<div class="a c b b2" style="right:1367px;top:387px">ao000_D1</div>
<div class="a c g" style="left:421px;top:387px">1</div>
<div class="a c b b1" style="left:551px;top:387px">ao000</div>
<div class="a c" style="left:653px;top:387px">氧化铝加...</div>
<div class="a c" style="left:755px;top:387px">1日</div>
<div class="a c" style="left:836px;top:387px">有色...</div>
<div class="a c" style="right:408px;top:387px">10000</div>
<div class="a c" style="right:325px;top:387px">0</div>
<div class="a c" style="right:260px;top:387px">0</div>
<div class="a c" style="right:165px;top:387px">0.00</div>
<div class="a c" style="right:48px;top:387px">0.00</div>
<div class="a row" style="top:461px"></div>
<div class="a c" style="right:1688px;top:425px">6</div>
<div class="a c" style="left:136px;top:426px">待运行</div>
<div class="a c m" style="left:228px;top:425px">myunit</div>
<div class="a c b b2" style="right:1367px;top:425px">AP000_D1</div>
<div class="a c g" style="left:421px;top:425px">1</div>
<div class="a c b b1" style="left:551px;top:425px">AP000</div>
<div class="a c" style="left:653px;top:425px">苹果加权0</div>
<div class="a c" style="left:755px;top:425px">1日</div>
<div class="a c" style="left:836px;top:425px">农副...</div>
<div class="a c" style="right:408px;top:425px">10000</div>
<div class="a c" style="right:325px;top:425px">0</div>
<div class="a c" style="right:260px;top:425px">0</div>
<div class="a c" style="right:165px;top:425px">0.00</div>
<div class="a c" style="right:48px;top:425px">0.00</div>
<div class="a row" style="top:498px"></div>
<div class="a c" style="right:1688px;top:462px">7</div>
<div class="a c" style="left:136px;top:463px">待运行</div>
<div class="a c m" style="left:228px;top:462px">myunit</div>
<div class="a c b b2" style="right:1367px;top:462px">au000_D1</div>
<div class="a c g" style="left:421px;top:462px">1</div>
<div class="a c b b1" style="left:551px;top:462px">au000</div>
<div class="a c" style="left:653px;top:462px">黄金加权0</div>
<div class="a c" style="left:755px;top:462px">1日</div>
<div class="a c" style="left:836px;top:462px">贵金属</div>
<div class="a c" style="right:408px;top:462px">10000</div>
<div class="a c" style="right:325px;top:462px">0</div>
<div class="a c" style="right:260px;top:462px">0</div>
<div class="a c" style="right:165px;top:462px">0.00</div>
<div class="a c" style="right:48px;top:462px">0.00</div>
<div class="a row" style="top:536px"></div>
<div class="a c" style="right:1688px;top:500px">8</div>
<div class="a c" style="left:136px;top:501px">待运行</div>
<div class="a c m" style="left:228px;top:500px">myunit</div>
<div class="a c b b2" style="right:1367px;top:500px">b9000_D1</div>
<div class="a c g" style="left:421px;top:500px">1</div>
<div class="a c b b1" style="left:551px;top:500px">b9000</div>
<div class="a c" style="left:653px;top:500px">豆二加权0</div>
<div class="a c" style="left:755px;top:500px">1日</div>
<div class="a c" style="left:836px;top:500px">油脂...</div>
<div class="a c" style="right:408px;top:500px">10000</div>
<div class="a c" style="right:325px;top:500px">0</div>
<div class="a c" style="right:260px;top:500px">0</div>
<div class="a c" style="right:165px;top:500px">0.00</div>
<div class="a c" style="right:48px;top:500px">0.00</div>
<div class="a row" style="top:573px"></div>
<div class="a c" style="right:1688px;top:537px">9</div>
<div class="a c" style="left:136px;top:538px">待运行</div>
<div class="a c m" style="left:228px;top:537px">myunit</div>
<div class="a c b b2" style="right:1367px;top:537px">bc000_D1</div>
<div class="a c g" style="left:421px;top:537px">1</div>
<div class="a c b b1" style="left:551px;top:537px">bc000</div>
<div class="a c" style="left:653px;top:537px">国际铜加...</div>
<div class="a c" style="left:755px;top:537px">1日</div>
<div class="a c" style="left:836px;top:537px">有色...</div>
<div class="a c" style="right:408px;top:537px">10000</div>
<div class="a c" style="right:325px;top:537px">0</div>
<div class="a c" style="right:260px;top:537px">0</div>
<div class="a c" style="right:165px;top:537px">0.00</div>
<div class="a c" style="right:48px;top:537px">0.00</div>
<div class="a row" style="top:611px"></div>
<div class="a c" style="right:1688px;top:575px">10</div>
<div class="a c" style="left:136px;top:576px">待运行</div>
<div class="a c m" style="left:228px;top:575px">myunit</div>
<div class="a c b b2" style="right:1367px;top:575px">br000_D1</div>
<div class="a c g" style="left:421px;top:575px">1</div>
<div class="a c b b1" style="left:551px;top:575px">br000</div>
<div class="a c" style="left:653px;top:575px">合成橡胶...</div>
<div class="a c" style="left:755px;top:575px">1日</div>
<div class="a c" style="left:836px;top:575px">化工</div>
<div class="a c" style="right:408px;top:575px">10000</div>
<div class="a c" style="right:325px;top:575px">0</div>
<div class="a c" style="right:260px;top:575px">0</div>
<div class="a c" style="right:165px;top:575px">0.00</div>
<div class="a c" style="right:48px;top:575px">0.00</div>
<div class="a row" style="top:648px"></div>
<div class="a c" style="right:1688px;top:612px">11</div>
<div class="a c" style="left:136px;top:613px">待运行</div>
<div class="a c m" style="left:228px;top:612px">myunit</div>
<div class="a c b b2" style="right:1367px;top:612px">bu000_D1</div>
<div class="a c g" style="left:421px;top:612px">1</div>
<div class="a c b b1" style="left:551px;top:612px">bu000</div>
<div class="a c" style="left:653px;top:612px">沥青加权0</div>
<div class="a c" style="left:755px;top:612px">1日</div>
<div class="a c" style="left:836px;top:612px">能源</div>
<div class="a c" style="right:408px;top:612px">10000</div>
<div class="a c" style="right:325px;top:612px">0</div>
<div class="a c" style="right:260px;top:612px">0</div>
<div class="a c" style="right:165px;top:612px">0.00</div>
<div class="a c" style="right:48px;top:612px">0.00</div>
<div class="a row" style="top:686px"></div>
<div class="a c" style="right:1688px;top:650px">12</div>
<div class="a c" style="left:136px;top:651px">待运行</div>
<div class="a c m" style="left:228px;top:650px">myunit</div>
<div class="a c b b2" style="right:1367px;top:650px">bz000_D1</div>
<div class="a c g" style="left:421px;top:650px">1</div>
<div class="a c b b1" style="left:551px;top:650px">bz000</div>
<div class="a c" style="left:653px;top:650px">纯苯加权0</div>
<div class="a c" style="left:755px;top:650px">1日</div>
<div class="a c" style="left:836px;top:650px">化工</div>
<div class="a c" style="right:408px;top:650px">10000</div>
<div class="a c" style="right:325px;top:650px">0</div>
<div class="a c" style="right:260px;top:650px">0</div>
<div class="a c" style="right:165px;top:650px">0.00</div>
<div class="a c" style="right:48px;top:650px">0.00</div>
<div class="a row" style="top:723px"></div>
<div class="a c" style="right:1688px;top:687px">13</div>
<div class="a c" style="left:136px;top:688px">待运行</div>
<div class="a c m" style="left:228px;top:687px">myunit</div>
<div class="a c b b2" style="right:1367px;top:687px">c9000_D1</div>
<div class="a c g" style="left:421px;top:687px">1</div>
<div class="a c b b1" style="left:551px;top:687px">c9000</div>
<div class="a c" style="left:653px;top:687px">玉米加权0</div>
<div class="a c" style="left:755px;top:687px">1日</div>
<div class="a c" style="left:836px;top:687px">谷物</div>
<div class="a c" style="right:408px;top:687px">10000</div>
<div class="a c" style="right:325px;top:687px">0</div>
<div class="a c" style="right:260px;top:687px">0</div>
<div class="a c" style="right:165px;top:687px">0.00</div>
<div class="a c" style="right:48px;top:687px">0.00</div>
<div class="a row" style="top:761px"></div>
<div class="a c" style="right:1688px;top:725px">14</div>
<div class="a c" style="left:136px;top:726px">待运行</div>
<div class="a c m" style="left:228px;top:725px">myunit</div>
<div class="a c b b2" style="right:1367px;top:725px">CF000_D1</div>
<div class="a c g" style="left:421px;top:725px">1</div>
<div class="a c b b1" style="left:551px;top:725px">CF000</div>
<div class="a c" style="left:653px;top:725px">棉花加权0</div>
<div class="a c" style="left:755px;top:725px">1日</div>
<div class="a c" style="left:836px;top:725px">软商品</div>
<div class="a c" style="right:408px;top:725px">10000</div>
<div class="a c" style="right:325px;top:725px">0</div>
<div class="a c" style="right:260px;top:725px">0</div>
<div class="a c" style="right:165px;top:725px">0.00</div>
<div class="a c" style="right:48px;top:725px">0.00</div>
<div class="a row" style="top:798px"></div>
<div class="a c" style="right:1688px;top:762px">15</div>
<div class="a c" style="left:136px;top:763px">待运行</div>
<div class="a c m" style="left:228px;top:762px">myunit</div>
<div class="a c b b2" style="right:1367px;top:762px">CJ000_D1</div>
<div class="a c g" style="left:421px;top:762px">1</div>
<div class="a c b b1" style="left:551px;top:762px">CJ000</div>
<div class="a c" style="left:653px;top:762px">红枣加权0</div>
<div class="a c" style="left:755px;top:762px">1日</div>
<div class="a c" style="left:836px;top:762px">农副...</div>
<div class="a c" style="right:408px;top:762px">10000</div>
<div class="a c" style="right:325px;top:762px">0</div>
<div class="a c" style="right:260px;top:762px">0</div>
<div class="a c" style="right:165px;top:762px">0.00</div>
<div class="a c" style="right:48px;top:762px">0.00</div>
<div class="a row" style="top:836px"></div>
<div class="a c" style="right:1688px;top:800px">16</div>
<div class="a c" style="left:136px;top:801px">待运行</div>
<div class="a c m" style="left:228px;top:800px">myunit</div>
<div class="a c b b2" style="right:1367px;top:800px">cs000_D1</div>
<div class="a c g" style="left:421px;top:800px">1</div>
<div class="a c b b1" style="left:551px;top:800px">cs000</div>
<div class="a c" style="left:653px;top:800px">玉米淀粉...</div>
<div class="a c" style="left:755px;top:800px">1日</div>
<div class="a c" style="left:836px;top:800px">谷物</div>
<div class="a c" style="right:408px;top:800px">10000</div>
<div class="a c" style="right:325px;top:800px">0</div>
<div class="a c" style="right:260px;top:800px">0</div>
<div class="a c" style="right:165px;top:800px">0.00</div>
<div class="a c" style="right:48px;top:800px">0.00</div>
<div class="a row" style="top:873px"></div>
<div class="a c" style="right:1688px;top:837px">17</div>
<div class="a c" style="left:136px;top:838px">待运行</div>
<div class="a c m" style="left:228px;top:837px">myunit</div>
<div class="a c b b2" style="right:1367px;top:837px">cu000_D1</div>
<div class="a c g" style="left:421px;top:837px">1</div>
<div class="a c b b1" style="left:551px;top:837px">cu000</div>
<div class="a c" style="left:653px;top:837px">沪铜加权0</div>
<div class="a c" style="left:755px;top:837px">1日</div>
<div class="a c" style="left:836px;top:837px">有色...</div>
<div class="a c" style="right:408px;top:837px">10000</div>
<div class="a c" style="right:325px;top:837px">0</div>
<div class="a c" style="right:260px;top:837px">0</div>
<div class="a c" style="right:165px;top:837px">0.00</div>
<div class="a c" style="right:48px;top:837px">0.00</div>
<div class="a row" style="top:911px"></div>
<div class="a c" style="right:1688px;top:875px">18</div>
<div class="a c" style="left:136px;top:876px">待运行</div>
<div class="a c m" style="left:228px;top:875px">myunit</div>
<div class="a c b b2" style="right:1367px;top:875px">CY000_D1</div>
<div class="a c g" style="left:421px;top:875px">1</div>
<div class="a c b b1" style="left:551px;top:875px">CY000</div>
<div class="a c" style="left:653px;top:875px">棉纱加权0</div>
<div class="a c" style="left:755px;top:875px">1日</div>
<div class="a c" style="left:836px;top:875px">软商品</div>
<div class="a c" style="right:408px;top:875px">10000</div>
<div class="a c" style="right:325px;top:875px">0</div>
<div class="a c" style="right:260px;top:875px">0</div>
<div class="a c" style="right:165px;top:875px">0.00</div>
<div class="a c" style="right:48px;top:875px">0.00</div>
<div class="a row" style="top:948px"></div>
<div class="a c" style="right:1688px;top:912px">19</div>
<div class="a c" style="left:136px;top:913px">待运行</div>
<div class="a c m" style="left:228px;top:912px">myunit</div>
<div class="a c b b2" style="right:1367px;top:912px">eb000_D1</div>
<div class="a c g" style="left:421px;top:912px">1</div>
<div class="a c b b1" style="left:551px;top:912px">eb000</div>
<div class="a c" style="left:653px;top:912px">苯乙烯加...</div>
<div class="a c" style="left:755px;top:912px">1日</div>
<div class="a c" style="left:836px;top:912px">化工</div>
<div class="a c" style="right:408px;top:912px">10000</div>
<div class="a c" style="right:325px;top:912px">0</div>
<div class="a c" style="right:260px;top:912px">0</div>
<div class="a c" style="right:165px;top:912px">0.00</div>
<div class="a c" style="right:48px;top:912px">0.00</div>
<div class="a row" style="top:986px"></div>
<div class="a c" style="right:1688px;top:950px">20</div>
<div class="a c" style="left:136px;top:951px">待运行</div>
<div class="a c m" style="left:228px;top:950px">myunit</div>
<div class="a c b b2" style="right:1367px;top:950px">ec000_D1</div>
<div class="a c g" style="left:421px;top:950px">1</div>
<div class="a c b b1" style="left:551px;top:950px">ec000</div>
<div class="a c" style="left:653px;top:950px">欧线集运...</div>
<div class="a c" style="left:755px;top:950px">1日</div>
<div class="a c" style="left:836px;top:950px">航运</div>
<div class="a c" style="right:408px;top:950px">10000</div>
<div class="a c" style="right:325px;top:950px">0</div>
<div class="a c" style="right:260px;top:950px">0</div>
<div class="a c" style="right:165px;top:950px">0.00</div>
<div class="a c" style="right:48px;top:950px">0.00</div>
<div class="a row" style="top:1023px"></div>
<div class="a c" style="right:1688px;top:987px">21</div>
<div class="a c" style="left:136px;top:988px">待运行</div>
<div class="a c m" style="left:228px;top:987px">myunit</div>
<div class="a c b b2" style="right:1367px;top:987px">eg000_D1</div>
<div class="a c g" style="left:421px;top:987px">1</div>
<div class="a c b b1" style="left:551px;top:987px">eg000</div>
<div class="a c" style="left:653px;top:987px">乙二醇加...</div>
<div class="a c" style="left:755px;top:987px">1日</div>
<div class="a c" style="left:836px;top:987px">化工</div>
<div class="a c" style="right:408px;top:987px">10000</div>
<div class="a c" style="right:325px;top:987px">0</div>
<div class="a c" style="right:260px;top:987px">0</div>
<div class="a c" style="right:165px;top:987px">0.00</div>
<div class="a c" style="right:48px;top:987px">0.00</div>
<div class="a row" style="top:1061px"></div>
<div class="a c" style="right:1688px;top:1025px">22</div>
<div class="a c" style="left:136px;top:1026px">待运行</div>
<div class="a c m" style="left:228px;top:1025px">myunit</div>
<div class="a c b b2" style="right:1367px;top:1025px">fb000_D1</div>
<div class="a c g" style="left:421px;top:1025px">1</div>
<div class="a c b b1" style="left:551px;top:1025px">fb000</div>
<div class="a c" style="left:653px;top:1025px">纤维板加...</div>
<div class="a c" style="left:755px;top:1025px">1日</div>
<div class="a c" style="left:836px;top:1025px">轻工</div>
<div class="a c" style="right:408px;top:1025px">10000</div>
<div class="a c" style="right:325px;top:1025px">0</div>
<div class="a c" style="right:260px;top:1025px">0</div>
<div class="a c" style="right:165px;top:1025px">0.00</div>
<div class="a c" style="right:48px;top:1025px">0.00</div>
<div class="a row" style="top:1098px"></div>
<div class="a c" style="right:1688px;top:1062px">23</div>
<div class="a c" style="left:136px;top:1063px">待运行</div>
<div class="a c m" style="left:228px;top:1062px">myunit</div>
<div class="a c b b2" style="right:1367px;top:1062px">FG000_D1</div>
<div class="a c g" style="left:421px;top:1062px">1</div>
<div class="a c b b1" style="left:551px;top:1062px">FG000</div>
<div class="a c" style="left:653px;top:1062px">玻璃加权0</div>
<div class="a c" style="left:755px;top:1062px">1日</div>
<div class="a c" style="left:836px;top:1062px">轻工</div>
<div class="a c" style="right:408px;top:1062px">10000</div>
<div class="a c" style="right:325px;top:1062px">0</div>
<div class="a c" style="right:260px;top:1062px">0</div>
<div class="a c" style="right:165px;top:1062px">0.00</div>
<div class="a c" style="right:48px;top:1062px">0.00</div>
<div class="a" id="lb"></div>
</body></html>
